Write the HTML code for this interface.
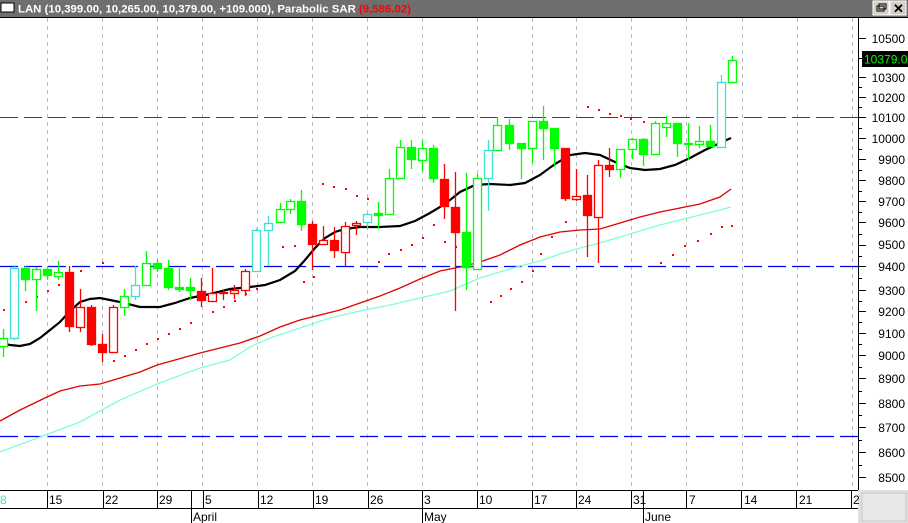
<!DOCTYPE html>
<html><head><meta charset="utf-8"><style>
html,body{margin:0;padding:0;background:#fff;width:908px;height:523px;overflow:hidden}
svg{display:block;font-family:"Liberation Sans",Arial,sans-serif}
</style></head><body>
<svg id="c" width="908" height="523" viewBox="0 0 908 523" xmlns="http://www.w3.org/2000/svg">
<rect x="0" y="0" width="908" height="523" fill="#fff"/>
<rect x="0" y="0" width="908" height="17" fill="#6f6f6f"/>
<rect x="1" y="3" width="13" height="9" fill="#fff" stroke="#000" stroke-width="1"/>
<text x="18" y="12.5" font-size="11.4" font-weight="bold" fill="#fff">LAN (10,399.00, 10,265.00, 10,379.00, +109.000), Parabolic SAR <tspan fill="#ff0000">(9,586.02)</tspan></text>
<rect x="873" y="1" width="16" height="14" fill="#d4d0c8" stroke="#fff"/>
<rect x="877" y="6" width="7" height="5" fill="none" stroke="#000"/><rect x="879" y="4" width="7" height="5" fill="none" stroke="#000"/>
<rect x="890" y="1" width="16" height="14" fill="#d4d0c8" stroke="#fff"/>
<text x="893" y="13" font-size="13" font-weight="bold" fill="#000">✕</text>
<line x1="0" y1="17.5" x2="908" y2="17.5" stroke="#000"/>
<g id="grid" stroke="#bbb" stroke-dasharray="4,4" stroke-width="1"></g>
<line x1="0" y1="117.5" x2="858" y2="117.5" stroke="#d00" stroke-dasharray="18,6" stroke-width="1"/>
<line x1="0" y1="266.5" x2="858" y2="266.5" stroke="#00f" stroke-dasharray="18,6" stroke-width="1.3"/>
<line x1="0" y1="436.5" x2="858" y2="436.5" stroke="#00f" stroke-dasharray="18,6" stroke-width="1.3"/>
<g id="ma"></g>
<g id="sar" fill="#f00"></g>
<g id="cand"></g>
<line x1="858.5" y1="18" x2="858.5" y2="490" stroke="#000"/>
<g id="ticks" stroke="#000"></g>
<g font-size="12" fill="#000" text-anchor="end">
<text x="905" y="43">10500</text>
<text x="905" y="82">10300</text>
<text x="905" y="102">10200</text>
<text x="905" y="122">10100</text>
<text x="905" y="143">10000</text>
<text x="905" y="164">9900</text>
<text x="905" y="185">9800</text>
<text x="905" y="206">9700</text>
<text x="905" y="227">9600</text>
<text x="905" y="249">9500</text>
<text x="905" y="271">9400</text>
<text x="905" y="295">9300</text>
<text x="905" y="316">9200</text>
<text x="905" y="338">9100</text>
<text x="905" y="360">9000</text>
<text x="905" y="383">8900</text>
<text x="905" y="408">8800</text>
<text x="905" y="432">8700</text>
<text x="905" y="457">8600</text>
<text x="905" y="482">8500</text>
</g>
<rect x="862" y="51" width="46" height="16" fill="#000"/>
<text x="864" y="63.5" font-size="12" fill="#00ff00">10379.00</text>
<line x1="0" y1="490.5" x2="858" y2="490.5" stroke="#000"/>
<line x1="0" y1="508.5" x2="858" y2="508.5" stroke="#000"/>
<rect x="858" y="490" width="50" height="33" fill="#e0e0e0"/>
<rect x="862" y="493" width="44" height="28" fill="#e8e8e8" stroke="#c8c8c8"/>
<g id="dsep" stroke="#000"></g>
<g font-size="12" fill="#000">
<text x="0" y="504" fill="#40e0d0">8</text>
<text x="49" y="504">15</text><text x="105" y="504">22</text><text x="159" y="504">29</text>
<text x="205" y="504">5</text><text x="260" y="504">12</text><text x="315" y="504">19</text>
<text x="370" y="504">26</text><text x="424" y="504">3</text><text x="479" y="504">10</text>
<text x="534" y="504">17</text><text x="578" y="504">24</text><text x="633" y="504">31</text>
<text x="689" y="504">7</text><text x="744" y="504">14</text><text x="799" y="504">21</text>
<text x="853" y="504">2</text>
<text x="193" y="521">April</text><text x="424" y="521">May</text><text x="645" y="521">June</text>
</g>
</svg>
<script>
var NS="http://www.w3.org/2000/svg";
function el(p,t,a){var e=document.createElementNS(NS,t);for(var k in a)e.setAttribute(k,a[k]);document.getElementById(p).appendChild(e);return e;}
var gx=[47,102,157,202,257,312,367,422,477,532,576,631,686,742,797,852];
gx.forEach(function(x){el("grid","line",{x1:x+.5,y1:18,x2:x+.5,y2:490});});
var sx=[47,103,157,191,203,258,313,368,422,477,532,576,631,643,686,741,796,851];
sx.forEach(function(x){el("dsep","line",{x1:x+.5,y1:490,x2:x+.5,y2:508});});
[191,422,643].forEach(function(x){el("dsep","line",{x1:x+.5,y1:508,x2:x+.5,y2:523});});
var maj=[38,77,97,117,138,159,180,201,222,245,266,290,311,333,355,378,403,427,452,477];
maj.forEach(function(y){el("ticks","line",{x1:858,y1:y+.5,x2:866,y2:y+.5});});
for(var i=0;i<maj.length-1;i++){var m=Math.round((maj[i]+maj[i+1])/2);el("ticks","line",{x1:858,y1:m+.5,x2:862,y2:m+.5});}
el("ticks","line",{x1:858,y1:58.5,x2:866,y2:58.5});
function pl(pts,c,w){el("ma","polyline",{points:pts,fill:"none",stroke:c,"stroke-width":w});}
pl("0,452 40,437 80,422 120,400 157,384 200,368 230,360 250,347 270,338 300,328 330,318 360,311 390,305 420,298 450,291 480,278 500,272 520,266 540,261 560,254 580,248 600,243 620,237 640,231 660,225 680,220 700,215 720,210 731,207","#7fffd4",1.3);
pl("0,421 20,410 47,397 60,391 80,386 100,384 120,378 140,372 157,365 175,360 200,353 220,348 240,343 260,336 280,327 300,320 320,315 340,310 360,303 380,296 400,288 420,279 440,271 460,267 480,262 500,255 520,245 540,237 560,232 580,230 600,229 620,223 640,217 660,212 680,208 700,204 720,197 731,189","#e00000",1.3);
pl("0,343 10,345 20,346 30,344 40,338 50,330 60,322 70,311 80,302 90,299 100,298 110,300 120,302 140,307 160,307 175,303 190,298 210,294 230,289 250,287 265,285 280,280 295,271 305,260 315,248 325,238 335,232 345,229 360,227 380,227 400,226 415,221 430,213 445,204 460,192 475,185 490,184 510,185 525,183 540,175 555,164 570,155 585,153 600,155 615,162 630,168 645,170 660,169 675,165 690,158 705,150 720,143 731,138","#000",2.2);
var sd=[[3,309],[14,304],[25,301],[36,296],[47,290],[58,284],[69,279],[80,270],[102,262],[113,360],[124,355],[135,349],[146,343],[157,338],[168,333],[179,328],[190,322],[212,311],[223,306],[234,300],[245,293],[256,288],[282,246],[294,245],[303,281],[313,276],[322,183],[333,186],[345,188],[356,195],[367,198],[378,261],[388,253],[400,249],[411,244],[422,237],[433,224],[444,241],[455,246],[466,258],[477,247],[490,301],[500,295],[510,288],[521,281],[532,270],[540,253],[551,236],[565,221],[587,106],[598,109],[609,113],[620,115],[630,118],[643,121],[660,262],[672,254],[684,245],[697,240],[710,233],[721,226],[731,225]];
sd.forEach(function(d){el("sar","rect",{x:d[0],y:d[1],width:2,height:2});});
var G="#00ff00",R="#ff0000",C="#40e0d0";
var cd=[[3,338,346,329,357,G,0],[14,268,338,265,340,C,0],[25,268,279,266,291,G,1],[36,269,279,267,311,G,0],[47,269,275,266,280,G,1],[58,272,276,261,280,G,0],
[69,272,326,266,332,R,1],[80,307,327,289,332,R,0],[91,307,344,305,346,R,1],[102,344,352,334,362,R,1],[113,307,352,305,353,R,0],
[124,296,307,289,316,G,0],[135,285,296,266,300,C,0],[146,263,285,251,286,G,0],[157,263,268,259,272,G,1],[168,268,287,260,290,G,1],
[179,287,289,268,292,G,1],[190,287,290,278,300,G,1],[201,291,300,278,307,R,1],[212,293,301,268,301,R,0],[223,292,293,290,300,R,0],
[234,290,293,285,299,R,0],[245,271,290,269,296,R,0],[256,230,271,228,271,C,0],[268,223,230,216,266,C,0],[280,209,222,203,222,G,0],
[290,201,209,199,214,G,0],[301,201,224,190,231,G,1],[312,224,244,221,270,R,1],[323,240,244,226,245,R,0],[334,240,250,227,258,R,1],
[345,226,252,222,266,R,0],[356,223,225,221,235,R,0],[367,214,222,213,228,C,0],[378,213,215,202,229,G,1],[389,178,214,169,214,G,0],
[400,147,178,140,178,G,0],[411,147,159,140,169,G,1],[422,148,160,140,172,G,0],[433,148,178,145,183,G,1],[444,179,206,164,219,R,1],
[455,207,232,172,311,R,1],[466,232,267,173,290,G,1],[477,178,269,174,270,G,0],[488,150,178,140,211,C,0],[497,125,150,117,150,G,0],
[509,125,143,119,150,G,1],[521,143,148,143,179,G,1],[532,121,148,121,163,G,0],[543,121,128,106,160,G,1],[554,128,148,128,167,G,1],
[565,148,198,148,201,R,1],[576,196,199,169,201,R,0],[587,195,215,175,257,R,1],[598,165,217,160,263,R,0],[609,165,169,148,177,R,1],
[620,149,169,149,178,G,0],[632,139,149,138,159,G,0],[643,139,154,138,166,G,1],[655,123,154,121,155,G,0],[666,123,127,116,137,G,0],
[677,123,143,123,157,G,1],[688,143,144,123,160,G,0],[699,141,144,126,148,G,0],[710,141,146,125,146,G,1],[721,82,147,75,147,C,0],[732,60,82,56,82,G,0]];
cd.forEach(function(c){
 el("cand","line",{x1:c[0]+.5,y1:c[3],x2:c[0]+.5,y2:c[4],stroke:c[5],"stroke-width":1.3});
 var h=Math.max(c[2]-c[1],1);
 el("cand","rect",{x:c[0]-3.5,y:c[1]+.5,width:8,height:h,fill:c[6]?c[5]:"#fff",stroke:c[5],"stroke-width":1.3});
});
</script>
</body></html>
